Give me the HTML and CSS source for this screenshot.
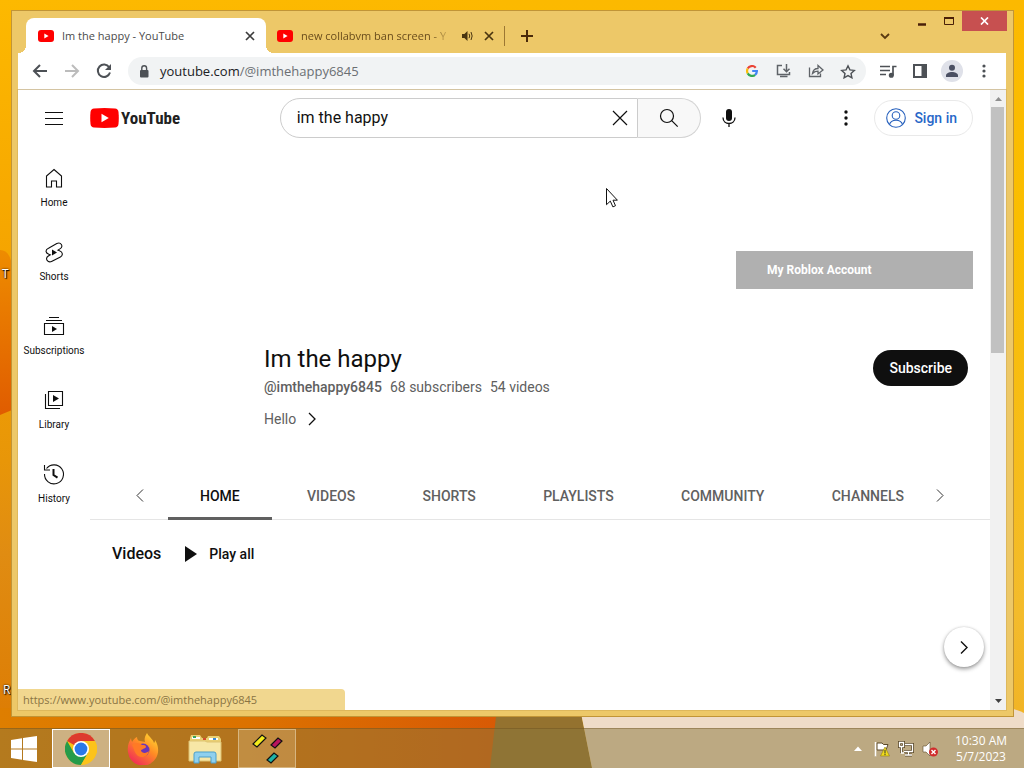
FILE: index.html
```html
<!DOCTYPE html>
<html lang="en">
<head>
<meta charset="utf-8">
<title>Im the happy - YouTube</title>
<link rel="stylesheet" href="styles.css">
</head>
<body>
<svg class="wallpaper" viewBox="0 0 1024 768" preserveAspectRatio="none" aria-hidden="true">
  <defs>
    <linearGradient id="left" x1="0" y1="0" x2="0" y2="1"><stop offset="0" stop-color="#fdb900"/><stop offset=".34" stop-color="#f5a400"/><stop offset=".6" stop-color="#e89608"/><stop offset=".72" stop-color="#e08c12"/><stop offset="1" stop-color="#dc7800"/></linearGradient>
    <linearGradient id="blob" x1="0" y1="0" x2="0" y2="1"><stop offset="0" stop-color="#ee8c00"/><stop offset="1" stop-color="#e05c00"/></linearGradient>
    <linearGradient id="right" x1="0" y1="0" x2="0" y2="1"><stop offset="0" stop-color="#fcb900"/><stop offset=".3" stop-color="#fabe00"/><stop offset=".8" stop-color="#f3bb2c"/><stop offset="1" stop-color="#f0b022"/></linearGradient>
    <linearGradient id="floor" x1="0" y1="0" x2="1" y2="0"><stop offset="0" stop-color="#de7e00"/><stop offset=".5" stop-color="#dc7200"/><stop offset="1" stop-color="#d85a05"/></linearGradient>
  </defs>
  <rect width="1024" height="768" fill="url(#left)"/>
  <rect x="500" width="524" height="768" fill="url(#right)"/>
  <path d="M0 250c8 0 12 8 12 20v140L0 415z" fill="url(#blob)"/>
  <path d="M0 708h497v60H0z" fill="url(#floor)"/>
  <path d="M497 708h83l12 60H490z" fill="#94722f"/>
  <path d="M580 708h430q8 2 14 5v55H592z" fill="#efdcc8"/>
</svg>
<div class="desktop">
  <span class="desk-label desk-label-upper">T</span>
  <span class="desk-label desk-label-lower">R</span>
  <section class="window">
    <header class="tabstrip">
      <div class="tab tab-active">
        <svg class="favicon" viewBox="0 0 16 12"><rect width="16" height="12" rx="3" fill="#f00"/><path d="M6.300 3.400v5.200L10.600 6z" fill="#fff"/></svg>
        <span class="tab-title">Im the happy - YouTube</span>
        <button class="tab-close" aria-label="Close tab"><svg width="10" height="10" viewBox="0 0 10 10"><path d="M1 1l8 8M9 1L1 9" stroke="#3c3c3c" stroke-width="1.700"/></svg></button>
      </div>
      <div class="tab tab-idle">
        <svg class="favicon" viewBox="0 0 16 12"><rect width="16" height="12" rx="3" fill="#f00"/><path d="M6.300 3.400v5.200L10.600 6z" fill="#fff"/></svg>
        <span class="tab-title tab-title-fade">new collabvm ban screen - Y</span>
        <svg width="11" height="10" viewBox="0 0 11 10"><path d="M0 3h2.400L5.500 0v10L2.400 7H0z" fill="#4a3510"/><path d="M7 2.800q1.500 2.200 0 4.400M9 1q2.300 4 0 8" fill="none" stroke="#4a3510"/></svg>
        <button class="tab-close" aria-label="Close tab"><svg width="10" height="10" viewBox="0 0 10 10"><path d="M1 1l8 8M9 1L1 9" stroke="#4a3510" stroke-width="1.700"/></svg></button>
      </div>
      <button class="new-tab" aria-label="New tab"><svg width="12" height="12" viewBox="0 0 12 12"><path d="M6 0v12M0 6h12" stroke="#4a2a0a" stroke-width="2"/></svg></button>
      <button class="tab-search" aria-label="Search tabs"><svg width="10" height="7" viewBox="0 0 10 7"><path d="M1 1l4 4 4-4" fill="none" stroke="#5a3a10" stroke-width="1.800"/></svg></button>
      <div class="controls">
        <button aria-label="Minimize"><svg width="10" height="12" viewBox="0 0 10 12"><path d="M1 9.500h8" stroke="#4a2008" stroke-width="2.500"/></svg></button>
        <button aria-label="Maximize"><svg width="10" height="8" viewBox="0 0 10 8"><path d="M.5 1v6.500h9V1" fill="none" stroke="#4a2008"/><path d="M0 1h10" stroke="#4a2008" stroke-width="2"/></svg></button>
        <button class="control-close" aria-label="Close"><svg width="9" height="8" viewBox="0 0 9 8"><path d="M1 .5l7 7M8 .5l-7 7" stroke="#fff" stroke-width="1.700"/></svg></button>
      </div>
    </header>
    <div class="toolbar">
      <button class="tool" aria-label="Back"><svg width="16" height="14" viewBox="0 0 16 14"><path d="M15 7H2M8 1L2 7l6 6" fill="none" stroke="#4d5156" stroke-width="2"/></svg></button>
      <button class="tool" aria-label="Forward"><svg width="16" height="14" viewBox="0 0 16 14"><path d="M1 7h13M8 1l6 6-6 6" fill="none" stroke="#bcbcbc" stroke-width="2"/></svg></button>
      <button class="tool" aria-label="Reload"><svg width="16" height="16" viewBox="0 0 16 16"><path d="M13.200 4.200A6.200 6.200 0 1 0 14 9.500" fill="none" stroke="#4d5156" stroke-width="2"/><path d="M15 1v6H9z" fill="#4d5156"/></svg></button>
      <div class="omnibox">
        <svg width="10" height="13" viewBox="0 0 10 13"><rect x="1" y="5" width="8.500" height="7.500" rx="1" fill="#4d5156"/><path d="M2.800 5.500V3.200a2.400 2.400 0 0 1 4.800 0v2.300" fill="none" stroke="#4d5156" stroke-width="1.400"/></svg>
        <span class="address"><span class="host">youtube.com</span>/@imthehappy6845</span>
        <button class="tool" aria-label="Search with Google"><svg width="12" height="12" viewBox="0 0 12 12" fill="none" stroke-width="2.200"><path d="M9.700 2.700A4.900 4.900 0 0 0 1.700 3.600" stroke="#ea4335"/><path d="M1.700 3.600a5 5 0 0 0 0 4.800" stroke="#fbbc05"/><path d="M1.700 8.400a4.900 4.900 0 0 0 7.400 1.400" stroke="#34a853"/><path d="M9.100 9.800A4.700 4.700 0 0 0 10.900 6H6.200" stroke="#4285f4"/></svg></button>
        <button class="tool" aria-label="Install app"><svg width="16" height="14" viewBox="0 0 16 14" fill="none" stroke="#5f6368" stroke-width="1.500"><path d="M6 1.500H1.500v9h12V8M4 12.500h7.500M10.500 0v7.500M7.500 4.800l3 3 3-3"/></svg></button>
        <button class="tool" aria-label="Share"><svg width="16" height="14" viewBox="0 0 16 14" fill="none" stroke="#5f6368" stroke-width="1.300"><path d="M1.500 3.500v9h11V9.500M4.500 9.500C5 6 7 4.500 10 4.500V1.500L15 6l-5 4V7.200C7.500 7.200 6 8 4.500 9.500z"/></svg></button>
        <button class="tool" aria-label="Bookmark"><svg width="16" height="15" viewBox="0 0 16 15"><path d="M8 1.800l1.900 4.100 4.400.5-3.300 3 .9 4.400L8 11.600l-3.900 2.200.9-4.400-3.300-3 4.400-.5z" fill="none" stroke="#4d5156" stroke-width="1.400"/></svg></button>
      </div>
      <div class="toolbar-end">
        <button class="tool" aria-label="Media"><svg width="17" height="13" viewBox="0 0 17 13" fill="none" stroke="#4d5156" stroke-width="1.700"><path d="M0 1.500h10M0 5.500h10M0 9.500h6M13 10.500V1.500h3.500"/><circle cx="11.300" cy="10.300" r="1.700" fill="#4d5156"/></svg></button>
        <button class="tool" aria-label="Side panel"><svg width="14" height="14" viewBox="0 0 14 14"><rect x="1" y="1" width="12" height="12" fill="none" stroke="#4d5156" stroke-width="2"/><path d="M8.500 0H14v14H8.500z" fill="#4d5156"/></svg></button>
        <button class="tool tool-profile" aria-label="Profile"><svg width="14" height="14" viewBox="0 0 14 14" fill="#4b5063"><circle cx="7" cy="3.800" r="3"/><path d="M1 13v-1.500C1 9.300 4 8 7 8s6 1.300 6 3.500V13z"/></svg></button>
        <button class="tool" aria-label="Menu"><svg width="4" height="14" viewBox="0 0 4 14" fill="#4d5156"><circle cx="2" cy="2" r="1.600"/><circle cx="2" cy="7" r="1.600"/><circle cx="2" cy="12" r="1.600"/></svg></button>
      </div>
    </div>
    <div class="viewport">
      <div class="page">
        <header class="masthead">
          <div class="masthead-start">
            <button class="icon-button" aria-label="Guide"><svg width="18" height="13" viewBox="0 0 18 13"><path d="M0 .5h18M0 6.500h18M0 12.500h18" stroke="#0f0f0f"/></svg></button>
            <a class="logo" href="#">
              <svg width="29" height="20" viewBox="0 0 29 20"><path d="M4 .5Q14.500-.4 25 .5q3 .3 3.500 3.500.6 6 0 12-.5 3.200-3.500 3.500-10.500.9-21 0Q1 19.200.5 16q-.6-6 0-12Q1 .8 4 .5z" fill="#f00"/><path d="M11.500 5.800v8.400l7.300-4.200z" fill="#fff"/></svg>
              <span class="logo-word">YouTube</span>
            </a>
          </div>
          <form class="search">
            <div class="search-field">
              <input class="search-input" type="text" value="im the happy" aria-label="Search">
              <button class="icon-button" type="button" aria-label="Clear"><svg width="16" height="16" viewBox="0 0 16 16"><path d="M1 1l14 14M15 1L1 15" stroke="#0f0f0f" stroke-width="1.200"/></svg></button>
            </div>
            <button class="search-go" type="button" aria-label="Search"><svg width="20" height="20" viewBox="0 0 20 20" fill="none" stroke="#0f0f0f" stroke-width="1.200"><circle cx="8" cy="8" r="6.500"/><path d="M12.700 12.700l6 6"/></svg></button>
            <button class="icon-button mic" type="button" aria-label="Search with your voice"><svg width="14" height="18" viewBox="0 0 14 18"><rect x="4" width="6" height="12" rx="3" fill="#0f0f0f"/><path d="M1 8.500c0 8 12 8 12 0M7 14.500V18" fill="none" stroke="#0f0f0f" stroke-width="1.300"/></svg></button>
          </form>
          <div class="masthead-end">
            <button class="icon-button" aria-label="Settings"><svg width="4" height="16" viewBox="0 0 4 16" fill="#0f0f0f"><circle cx="2" cy="2" r="1.700"/><circle cx="2" cy="8" r="1.700"/><circle cx="2" cy="14" r="1.700"/></svg></button>
            <a class="sign-in" href="#"><svg width="20" height="20" viewBox="0 0 20 20" fill="none" stroke="#2660bd" stroke-width="1.100"><circle cx="10" cy="10" r="9.300"/><circle cx="10" cy="7.500" r="3.800"/><path d="M3.500 16.500c1-3.300 3.500-4.200 6.500-4.200s5.500.9 6.500 4.200"/></svg>Sign in</a>
          </div>
        </header>
        <div class="page-body">
          <nav class="guide">
            <a class="guide-item" href="#"><svg viewBox="0 0 24 24"><path d="M12 3.500l7.500 6.500v11h-5v-6h-5v6h-5V10z"/></svg>Home</a>
            <a class="guide-item" href="#"><svg viewBox="0 0 24 24"><path d="M6.500 8.300l8.300-4.700c4-2 7 2.800 3.500 5l-2.300 1.500 1.500.6c3.700 1.200 3.500 4.900.9 6.200L10 21.300c-4.200 2.100-7.400-2.700-4-5l2.300-1.500-1.500-.6C3.300 13 3 9.800 6.500 8.300z"/><path class="solid" d="M10 9.500v6l5-3z"/></svg>Shorts</a>
            <a class="guide-item" href="#"><svg viewBox="0 0 24 24"><path d="M2.500 9.500h19v11h-19zM4 6.500h16M7 3.500h10"/><path class="solid" d="M10 12v6l5-3z"/></svg>Subscriptions</a>
            <a class="guide-item" href="#"><svg viewBox="0 0 24 24"><path d="M6.500 3.500h14v14h-14zM3.500 6v14.500H18"/><path class="solid" d="M11 7v7l6-3.500z"/></svg>Library</a>
            <a class="guide-item" href="#"><svg viewBox="0 0 24 24"><path d="M2.500 12A9.500 9.500 0 1 0 4.500 6.500M2.500 3v5h5.500"/><path class="bold" d="M11.500 7v6l4 2.700"/></svg>History</a>
          </nav>
          <main class="channel">
            <div class="banner"><a class="banner-link" href="#">My Roblox Account</a></div>
            <section class="channel-head">
              <div class="avatar"></div>
              <div class="channel-info">
                <h1>Im the happy</h1>
                <p class="stats"><b>@imthehappy6845</b><span>68 subscribers</span><span>54 videos</span></p>
                <a class="about" href="#">Hello <svg width="8" height="14" viewBox="0 0 8 14"><path d="M1 1l6 6-6 6" fill="none" stroke="#0f0f0f" stroke-width="1.300"/></svg></a>
              </div>
              <button class="subscribe">Subscribe</button>
            </section>
            <nav class="tabs">
              <button class="tabs-arrow" aria-label="Previous"><svg width="8" height="13" viewBox="0 0 8 13"><path d="M7 .5l-6 6 6 6" fill="none" stroke="#333"/></svg></button>
              <div class="tabs-list">
                <a class="tabs-item tabs-current" href="#">HOME</a>
                <a class="tabs-item" href="#">VIDEOS</a>
                <a class="tabs-item" href="#">SHORTS</a>
                <a class="tabs-item" href="#">PLAYLISTS</a>
                <a class="tabs-item" href="#">COMMUNITY</a>
                <a class="tabs-item" href="#">CHANNELS</a>
              </div>
              <button class="tabs-arrow" aria-label="Next"><svg width="8" height="13" viewBox="0 0 8 13"><path d="M1 .5l6 6-6 6" fill="none" stroke="#333"/></svg></button>
            </nav>
            <section class="shelf">
              <h2>Videos</h2>
              <a class="play-all" href="#"><svg width="12" height="16" viewBox="0 0 12 16"><path d="M0 0v16l12-8z" fill="#0f0f0f"/></svg>Play all</a>
            </section>
          </main>
        </div>
      </div>
      <div class="scrollbar">
        <svg width="7" height="4" viewBox="0 0 7 4"><path d="M0 4L3.500 0 7 4z" fill="#8f8f8f"/></svg>
        <div class="scroll-track"><div class="scroll-thumb"></div></div>
        <svg width="7" height="4" viewBox="0 0 7 4"><path d="M0 0h7L3.500 4z" fill="#404040"/></svg>
      </div>
      <button class="shelf-next" aria-label="Next videos"><svg width="8" height="13" viewBox="0 0 8 13"><path d="M1 .5l6 6-6 6" fill="none" stroke="#0f0f0f" stroke-width="1.400"/></svg></button>
      <div class="status">https://www.youtube.com/@imthehappy6845</div>
      <svg class="cursor" width="12" height="20" viewBox="0 0 12 20"><path d="M.5.5v16.200l3.800-3.600 2.600 5.800 2.600-1.200-2.500-5.500h4.400z" fill="#fff" stroke="#111"/></svg>
    </div>
  </section>
</div>
<footer class="taskbar">
  <button class="task" aria-label="Start"><svg width="28" height="28" viewBox="0 0 28 28" fill="#fff"><path d="M1 5l11-1.800V13.500H1zM13 3l14-2v12.500H13zM1 14.500h11v10.300L1 23zM13 14.500h14V27l-14-2z"/></svg></button>
  <button class="task task-active" aria-label="Chrome"><svg width="32" height="32" viewBox="0 0 32 32"><circle cx="16" cy="16" r="16" fill="#fbc116"/><path d="M16 16L2.100 8A16 16 0 0 1 29.900 8z" fill="#dd3b2e"/><path d="M2.100 8A16 16 0 0 0 16 32l7-12L16 16 9 20z" fill="#259b4a"/><path d="M29.900 8H16l7 12-7 12A16 16 0 0 0 29.900 8z" fill="#fcc31b"/><circle cx="16" cy="16" r="8" fill="#fff"/><circle cx="16" cy="16" r="6.400" fill="#2a78e8"/></svg></button>
  <button class="task" aria-label="Firefox"><svg width="32" height="32" viewBox="0 0 32 32"><defs><linearGradient id="fox" x1=".9" y1="0" x2=".2" y2="1"><stop offset="0" stop-color="#ffe034"/><stop offset=".45" stop-color="#ff8b24"/><stop offset="1" stop-color="#f0245c"/></linearGradient></defs><path d="M20 0c2 4 6 6 7 10 1-1 1-2 1-3 4 6 4 13 1 18A15 15 0 0 1 1 19C0 13 2 9 4 5c0 2 1 3 1 4 2-3 3-4 5-5 0 2 1 4 3 4l5 1c-1-3 0-6 2-9z" fill="url(#fox)"/><circle cx="16" cy="17" r="6.500" fill="#6a35b8"/><path d="M5 12c4-3 8-2 10 0 2 0 4 0 4 2-1 2-5 2-5 4 2 3 6 2 8 0-1 6-8 8-12 4-3-3-3-7-5-10z" fill="#ff7a25"/></svg></button>
  <button class="task" aria-label="File Explorer"><svg width="34" height="30" viewBox="0 0 34 30"><path d="M2 4l1-3h9l2 3h5l1-2h11l2 3v21H2z" fill="#e9cf73"/><path d="M4 3h8v2H4zM21 4h9v2h-9z" fill="#fff"/><path d="M5 2h3v2H5z" fill="#39a45c"/><path d="M15 4h3v2h-3z" fill="#d44a32"/><path d="M25 4h3v2h-3z" fill="#3b8ad6"/><path d="M1 7h16l2 1h14v19H1z" fill="#f7e7a6" stroke="#dec372"/><path d="M6 29V20q0-2 2-2h18q2 0 2 2v9h-5v-6H11v6z" fill="#8fd0ee" stroke="#4c9fc9"/></svg></button>
  <button class="task task-open" aria-label="Block tool"><svg width="32" height="32" viewBox="0 0 32 32" stroke="#111" stroke-width="1.200"><path d="M2 11l9-9 4 3-9 9z" fill="#f4ec1c"/><path d="M20 12l7-7 4 3-7 7z" fill="#b8145e"/><path d="M16 27l7-7 4 3-7 7z" fill="#1fb3a6"/></svg></button>
  <div class="tray">
    <svg width="8" height="5" viewBox="0 0 8 5"><path d="M0 5l4-4.500L8 5z" fill="#fff"/></svg>
    <svg width="16" height="16" viewBox="0 0 16 16"><path d="M1.500 1v14.500M3 2h5l1.500 1.500H14L12 9H3z" fill="#fff" stroke="#5c4a2a"/><path d="M1.500 1v14.500" stroke="#fff" stroke-width="1.500"/><path d="M11 6l4.500 9h-9z" fill="#f0dc1c" stroke="#907c10" stroke-width=".6"/><path d="M11 9v3.500M11 13v1.200" stroke="#333"/></svg>
    <svg width="16" height="16" viewBox="0 0 16 16"><g fill="none" stroke="#5c4a2a" stroke-width="3"><path d="M7 3.500h7.500v7H6M10.500 10.500V14M7 14h7M1.500 1.500h4v4h-4zM3.500 5.500V12"/></g><g fill="none" stroke="#fff" stroke-width="1.300"><path d="M7 3.500h7.500v7H6M10.500 10.500V14M7 14h7M1.500 1.500h4v4h-4zM3.500 5.500V12H6"/></g></svg>
    <svg width="16" height="16" viewBox="0 0 16 16"><path d="M1 5h3l4-4v14l-4-4H1z" fill="#fff" stroke="#5c4a2a" stroke-width=".6"/><circle cx="11.500" cy="11" r="4.500" fill="#d02c2c"/><path d="M9.500 9l4 4M13.500 9l-4 4" stroke="#fff" stroke-width="1.400"/></svg>
  </div>
  <div class="clock"><span>10:30 AM</span><span>5/7/2023</span></div>
</footer>
</body>
</html>
```
FILE: styles.css
```css
* { box-sizing: border-box; }
body {
  margin: 0;
  height: 100vh;
  display: flex;
  flex-direction: column;
  position: relative;
  overflow: hidden;
  font-family: Roboto, "Liberation Sans", sans-serif;
  font-size: 14px;
  color: #0f0f0f;
}
button { border: 0; padding: 0; margin: 0; background: none; font: inherit; color: inherit; }
a { color: inherit; text-decoration: none; }
h1, h2, p { margin: 0; font-weight: 400; }
svg { display: block; flex: none; }
button { display: flex; align-items: center; justify-content: center; flex: none; }

.wallpaper { position: absolute; inset: 0; width: 100%; height: 100%; }
.desktop { flex: 1; min-height: 0; display: flex; position: relative; padding: 10px 10px 11px 11px; }
.desk-label { position: absolute; left: 2px; font: 12px "Open Sans", sans-serif; color: #fff; text-shadow: 1px 1px 1px #000, 0 0 2px #000; }
.desk-label-upper { top: 265px; }
.desk-label-lower { top: 681px; left: 3px; }

.window {
  flex: 1; min-width: 0; position: relative;
  display: flex; flex-direction: column;
  background: #edc868;
  border: 1px solid #c19537;
  padding: 0 7px 6px 6px;
}
.tabstrip { display: flex; height: 42px; flex: none; padding-left: 8px; font-family: "Open Sans", "Noto Sans", sans-serif; font-size: 11px; }
.tab { display: flex; align-items: center; margin-top: 7px; }
.tab-active { width: 240px; background: #fff; border-radius: 8px 8px 0 0; padding: 0 11px 0 12px; position: relative; color: #4a4a4a; }
.tab-active::before, .tab-active::after { content: ""; position: absolute; bottom: 0; width: 8px; height: 8px; }
.tab-active::before { right: 100%; background: radial-gradient(circle at 0 0, transparent 8px, #fff 8px); }
.tab-active::after { left: 100%; background: radial-gradient(circle at 100% 0, transparent 8px, #fff 8px); }
.tab-idle { width: 239px; padding: 0 11px; color: #6a4d1c; position: relative; }
.tab-idle::after { content: ""; position: absolute; right: 0; top: 8px; height: 20px; border-right: 1px solid #9c7733; }
.favicon { width: 16px; height: 12px; margin-right: 8px; }
.tab-title { flex: 1; min-width: 0; overflow: hidden; white-space: nowrap; line-height: 16px; }
.tab-title-fade { margin-right: 9px; -webkit-mask-image: linear-gradient(90deg, #000 85%, transparent 100%); mask-image: linear-gradient(90deg, #000 85%, transparent 100%); }
.tab-idle .tab-close { margin-left: 11px; }
.new-tab { width: 28px; height: 28px; margin: 11px 0 0 8px; }
.tab-search { width: 28px; height: 28px; margin: 11px 9px 0 auto; }
.controls { display: flex; height: 20px; margin-right: -1px; }
.controls button { width: 27px; height: 20px; }
.controls .control-close { width: 45px; background: #c75050; }

.toolbar { display: flex; align-items: center; height: 37px; flex: none; background: #fff; border-bottom: 1px solid #dcdcdc; padding: 0 6px; }
.tool { width: 32px; height: 28px; }
.omnibox { flex: 1; display: flex; align-items: center; height: 28px; border-radius: 14px; background: #f1f3f4; margin-left: 8px; padding: 0 2px 0 11px; }
.address { flex: 1; margin-left: 11px; font-family: "Open Sans", "Noto Sans", sans-serif; font-size: 13px; line-height: 20px; color: #6b6f73; }
.host { color: #202124; }
.toolbar-end { display: flex; align-items: center; margin-left: 6px; }
.tool-profile { width: 22px; height: 22px; margin: 0 5px; border-radius: 50%; background: #dfe1e9; }

.viewport { flex: 1; min-height: 0; display: flex; position: relative; background: #fff; outline: 1px solid #c9a04a66; }
.page { flex: 1; min-width: 0; overflow: hidden; }
.masthead { display: flex; align-items: center; justify-content: space-between; height: 56px; padding: 0 17px 0 16px; }
.masthead-start { display: flex; align-items: center; gap: 16px; width: 168px; }
.icon-button { width: 40px; height: 40px; }
.logo { display: flex; align-items: center; gap: 2px; }
.logo-word { font: bold 17px/24px "Liberation Sans Narrow", "Roboto Condensed", Roboto, sans-serif; color: #212121; }
.search { display: flex; width: 469px; }
.search-field { flex: 1; min-width: 0; display: flex; align-items: center; height: 40px; border: 1px solid #ccc; border-radius: 20px 0 0 20px; padding: 0 0 0 16px; }
.search-field .icon-button { width: 34px; }
.search-input { flex: 1; min-width: 0; border: 0; padding: 0; outline: 0; font: 16px/24px Roboto, sans-serif; color: #111; background: none; }
.search-go { width: 63px; height: 40px; border: 1px solid #d3d3d3; border-left: 0; border-radius: 0 20px 20px 0; background: #f8f8f8; }
.mic { margin-left: 8px; }
.masthead-end { display: flex; align-items: center; gap: 8px; }
.sign-in { display: flex; align-items: center; gap: 8px; height: 36px; padding: 0 15px 0 11px; border: 1px solid #e9e9e9; border-radius: 18px; color: #2867c8; font-weight: 500; }

.page-body { display: flex; }
.guide { width: 72px; flex: none; padding-top: 4px; }
.guide-item { display: flex; flex-direction: column; align-items: center; height: 74px; padding-top: 16px; gap: 6px; font-size: 10px; line-height: 14px; }
.guide-item svg { width: 24px; height: 24px; fill: none; stroke: #0f0f0f; stroke-width: 1.1; }
.guide-item .solid { fill: #0f0f0f; stroke: none; }
.guide-item .bold { stroke-width: 2; }

.channel { flex: 1; min-width: 0; }
.banner { height: 145px; display: flex; justify-content: flex-end; align-items: flex-end; padding: 0 17px 2px; }
.banner-link { width: 237px; height: 38px; padding-left: 31px; background: #b0b0b0; color: #fff; font-size: 12px; line-height: 38px; font-weight: 700; }
.channel-head { display: flex; align-items: flex-start; padding: 52px 22px 0; height: 181px; }
.avatar { width: 128px; height: 128px; margin-right: 24px; }
.channel-info { flex: 1; }
.channel-info h1 { font-size: 24px; line-height: 32px; }
.stats { display: flex; gap: 8px; margin-top: 1px; line-height: 22px; color: #606060; }
.stats b { font-weight: 500; }
.about { display: flex; align-items: center; gap: 12px; margin-top: 10px; line-height: 22px; color: #606060; }
.subscribe { height: 36px; margin-top: 7px; padding: 0 16px; border-radius: 18px; background: #0f0f0f; color: #fff; font-weight: 500; }
.tabs { display: flex; align-items: center; height: 48px; padding: 0 38px; border-bottom: 1px solid #e5e5e5; }
.tabs-arrow { width: 24px; height: 48px; }
.tabs-list { flex: 1; display: flex; justify-content: space-between; margin-left: 16px; }
.tabs-item { height: 48px; line-height: 48px; padding: 0 32px; font-weight: 500; color: #606060; }
.tabs-item:last-child { padding-right: 24px; }
.tabs-current { color: #0f0f0f; border-bottom: 3px solid #606060; }
.shelf { display: flex; align-items: center; gap: 24px; padding: 22px 22px 0; line-height: 24px; }
.shelf h2 { font-size: 16px; font-weight: 500; }
.play-all { display: flex; align-items: center; gap: 12px; font-weight: 500; }

.scrollbar { width: 16px; flex: none; display: flex; flex-direction: column; align-items: center; background: #f1f1f1; padding: 7px 1px; }
.scroll-track { flex: 1; align-self: stretch; padding: 6px 1px 6px 0; }
.scroll-thumb { height: 42%; background: #c1c1c1; }
.shelf-next { position: absolute; right: 22px; bottom: 43px; width: 40px; height: 40px; border-radius: 50%; background: #fff; box-shadow: 0 2px 4px rgba(0,0,0,.4), 0 0 2px rgba(0,0,0,.15); }
.status { position: absolute; left: 0; bottom: 0; width: 327px; height: 21px; padding-left: 5px; border-radius: 0 4px 0 0; background: #f1d78f; color: #8a7443; font: 11px/21px "Open Sans", "Noto Sans", sans-serif; }
.cursor { position: absolute; left: 588px; top: 98px; }

.taskbar { position: relative; flex: none; display: flex; align-items: center; height: 40px; background: rgba(138,117,60,.5); border-top: 1px solid rgba(100,70,20,.35); padding: 0 8px 0 0; }
.task { width: 58px; height: 39px; margin-right: 4px; border: 1px solid transparent; }
.task:first-child { width: 48px; }
.task-active { background: #cdb182; border-color: #fff; }
.task-open { background: rgba(225,200,150,.3); border-color: rgba(230,210,170,.6); }
.tray { display: flex; align-items: center; gap: 8px; margin-left: auto; }
.tray svg:first-child { margin-right: 4px; }
.clock { display: flex; flex-direction: column; align-items: center; width: 70px; margin-left: 8px; font: 12px/16px "Open Sans", "Noto Sans", sans-serif; color: #fff; }
```
